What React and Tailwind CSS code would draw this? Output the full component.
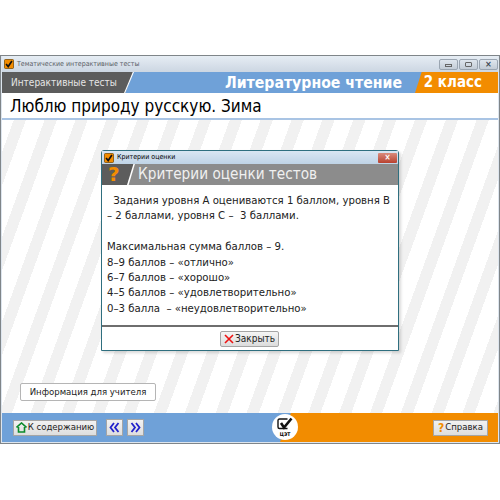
import React from 'react';

const sans = 'font-["DejaVu_Sans_Condensed","Noto_Sans",sans-serif]';

const WinButton = ({ children }) => (
    <div className="w-[19px] h-[11px] flex items-center justify-center border border-[#9aa5b1] rounded-[2px] bg-gradient-to-b from-[#dfe6ee] to-[#c3ccd6] text-[#3f4a55]">
        {children}
    </div>
);

const CheckIcon = ({ size = 10 }) => (
    <svg width={size} height={size} viewBox="0 0 12 12" className="shrink-0">
        <rect x="0.5" y="0.5" width="11" height="11" rx="1.5" fill="#f28c00" stroke="#7a4a00" />
        <path d="M2.5 6 L5 9 L9.5 2.5" fill="none" stroke="#111" strokeWidth="2" />
    </svg>
);

const NavButton = ({ dir }) => (
    <button className="w-[17px] h-[17px] flex items-center justify-center border border-[#a5a5a5] bg-gradient-to-b from-[#f2f2f2] to-[#dedede]">
        <svg width="11" height="11" viewBox="0 0 11 11">
            <path
                d={dir === 'left' ? 'M5 1 L1.5 5.5 L5 10 M9.5 1 L6 5.5 L9.5 10' : 'M1.5 1 L5 5.5 L1.5 10 M6 1 L9.5 5.5 L6 10'}
                fill="none"
                stroke="#2222cc"
                strokeWidth="1.8"
            />
        </svg>
    </button>
);

const App = () => {
    return (
        <div className={`relative w-[500px] h-[500px] bg-white overflow-hidden pt-[55px] ${sans}`}>
            <div className="h-[389px] flex flex-col border border-[#7f8589] bg-[#dde5ee] px-[1px] pb-[1px]">
                {/* title bar */}
                <div className="h-[16px] flex items-center gap-[3px] pl-[2px] bg-gradient-to-b from-[#e6edf4] to-[#ccd6e2]">
                    <CheckIcon />
                    <span className="text-[7px] text-[#5a6066] whitespace-nowrap">Тематические интерактивные тесты</span>
                    <div className="ml-auto flex gap-[1px]">
                        <WinButton>
                            <div className="w-[7px] h-[3px] border border-[#666] mt-[2px]" />
                        </WinButton>
                        <WinButton>
                            <div className="w-[7px] h-[5px] border border-[#666] rounded-[1px]" />
                        </WinButton>
                        <WinButton>
                            <span className="text-[9px] leading-none font-bold">×</span>
                        </WinButton>
                    </div>
                </div>

                {/* header band */}
                <div className="relative h-[21px] flex items-center bg-[#6fa1d8] overflow-hidden">
                    <div className="absolute left-0 top-0 h-full w-[131px] bg-[#5c5c5c] [clip-path:polygon(0_0,100%_0,94%_100%,0_100%)]" />
                    <div className="absolute left-[122px] top-0 h-full w-[10px] bg-white [clip-path:polygon(88%_0,100%_0,12%_100%,0_100%)]" />
                    <div className="absolute right-0 top-0 h-full w-[83px] bg-[#f28c00] [clip-path:polygon(8%_0,100%_0,100%_100%,0_100%)]" />
                    <span className="relative pl-[9px] text-[10px] text-[#e6e6e6] whitespace-nowrap">Интерактивные тесты</span>
                    <span className="absolute right-[96px] text-[15.7px] font-bold text-white whitespace-nowrap">Литературное чтение</span>
                    <span className="absolute right-[16px] text-[15px] font-bold text-white whitespace-nowrap">2 класс</span>
                </div>

                {/* lesson title */}
                <div className="h-[27px] flex items-center pl-[8px] pt-[2px] bg-white border-b-[2px] border-[#a9c4e4]">
                    <h1 className="text-[17px] text-black whitespace-nowrap">Люблю природу русскую. Зима</h1>
                </div>

                {/* stripes */}
                <div className="relative flex-1 flex items-end pl-[18px] pb-[12px] bg-[repeating-linear-gradient(110deg,#ffffff_0px,#ffffff_11px,#f1f1f1_11px,#f1f1f1_22.5px,#ffffff_22.5px,#ffffff_29px)]">
                    <button className="w-[136px] h-[18px] flex items-center justify-center bg-white border border-[#b5b5b5] rounded-[2px] text-[9.5px] text-[#222] whitespace-nowrap">
                        Информация для учителя
                    </button>
                </div>

                {/* footer */}
                <div className="relative h-[29px] flex items-center bg-[#6fa1d8]">
                    <div className="absolute right-0 top-0 h-full w-[218px] bg-[#f28c00] [clip-path:polygon(5%_0,100%_0,100%_100%,0_100%)]" />
                    <div className="relative flex items-center pl-[11px]">
                        <button className="w-[84px] h-[16px] flex items-center justify-center gap-[1px] border border-[#a5a5a5] bg-gradient-to-b from-[#f2f2f2] to-[#dedede] text-[9.5px] text-[#222] whitespace-nowrap">
                            <svg width="11" height="11" viewBox="0 0 11 11">
                                <path d="M0.5 5.5 L5.5 1 L10.5 5.5 M2.5 5 V10 H8.5 V5" fill="none" stroke="#0a8a2a" strokeWidth="1.6" />
                            </svg>
                            К содержанию
                        </button>
                        <div className="flex gap-[4px] ml-[9px]">
                            <NavButton dir="left" />
                            <NavButton dir="right" />
                        </div>
                    </div>
                    <button className="absolute right-[10px] w-[55px] h-[16px] flex items-center justify-center gap-[1px] border border-[#a5a5a5] bg-gradient-to-b from-[#f2f2f2] to-[#dedede] text-[9.5px] text-[#222] whitespace-nowrap">
                        <span className="text-[12px] leading-none font-bold text-[#f28c00]">?</span>
                        Справка
                    </button>
                </div>
            </div>

            {/* logo over the footer seam */}
            <div className="absolute left-[272px] top-[414px] w-[26px] h-[26px] rounded-full bg-white flex flex-col items-center justify-center">
                <svg width="18" height="15" viewBox="0 0 17 15">
                    <path d="M11 2 H3 Q1.5 2 1.5 3.5 V10 Q1.5 11.5 3 11.5 H11" fill="none" stroke="#111" strokeWidth="1.4" />
                    <path d="M4.5 6 L7.5 10.5 L15 1.5" fill="none" stroke="#111" strokeWidth="2.6" />
                </svg>
                <span className="text-[5px] leading-none font-bold text-black">ЦЭТ</span>
            </div>

            {/* dialog */}
            <div className="absolute left-[101px] top-[150px] w-[298px] h-[201px] flex flex-col border border-[#2f6f7f] rounded-t-[3px] bg-white shadow-[2px_2px_3px_rgba(0,0,0,0.15)]">
                <div className="h-[13px] flex items-center gap-[3px] pl-[2px] bg-gradient-to-b from-[#d9e6f2] to-[#bfd3e6]">
                    <CheckIcon />
                    <span className="text-[7px] text-black whitespace-nowrap">Критерии оценки</span>
                    <div className="ml-auto mr-[1px] w-[19px] h-[10px] flex items-center justify-center rounded-[1px] bg-gradient-to-b from-[#d98b7c] to-[#b8402e] text-white text-[8px] leading-none font-bold">
                        ×
                    </div>
                </div>
                <div className="relative h-[21px] flex items-center bg-[#8c8c8c]">
                    <div className="absolute left-0 top-0 h-full w-[33px] bg-[#5c5c5c] [clip-path:polygon(0_0,100%_0,76%_100%,0_100%)]" />
                    <div className="absolute left-[25px] top-0 h-full w-[8px] bg-white [clip-path:polygon(80%_0,100%_0,20%_100%,0_100%)]" />
                    <span className='relative pl-[6px] w-[36px] font-["DejaVu_Sans",sans-serif] text-[20px] leading-[21px] font-bold text-[#f28c00]'>?</span>
                    <span className="relative text-[15.2px] text-[#f0f0f0] whitespace-nowrap">Критерии оценки тестов</span>
                </div>
                <div className="flex-1 pl-[5px] pr-[2px] pt-[8px] text-[11.3px] leading-[15.4px] text-[#222] whitespace-nowrap">
                    <p className="indent-[3px]">&nbsp;Задания уровня А оцениваются 1 баллом, уровня В</p>
                    <p>– 2 баллами, уровня С – &nbsp;3 баллами.</p>
                    <p className="mt-[15.4px]">Максимальная сумма баллов – 9.</p>
                    <p>8–9 баллов – «отлично»</p>
                    <p>6–7 баллов – «хорошо»</p>
                    <p>4–5 баллов – «удовлетворительно»</p>
                    <p>0–3 балла &nbsp;– «неудовлетворительно»</p>
                </div>
                <div className="h-[25px] flex items-center justify-center border-t-[2px] border-[#6e6e6e]">
                    <button className="w-[59px] h-[16px] mr-[1px] flex items-center justify-center gap-[1px] border border-[#a5a5a5] rounded-[2px] bg-gradient-to-b from-[#f5f5f5] to-[#dcdcdc] text-[10px] text-[#222] whitespace-nowrap">
                        <svg width="10" height="10" viewBox="0 0 10 10">
                            <path d="M1 1 L9 9 M9 1 L1 9" stroke="#ee1111" strokeWidth="1.6" />
                        </svg>
                        Закрыть
                    </button>
                </div>
            </div>
        </div>
    );
};

export default App;
